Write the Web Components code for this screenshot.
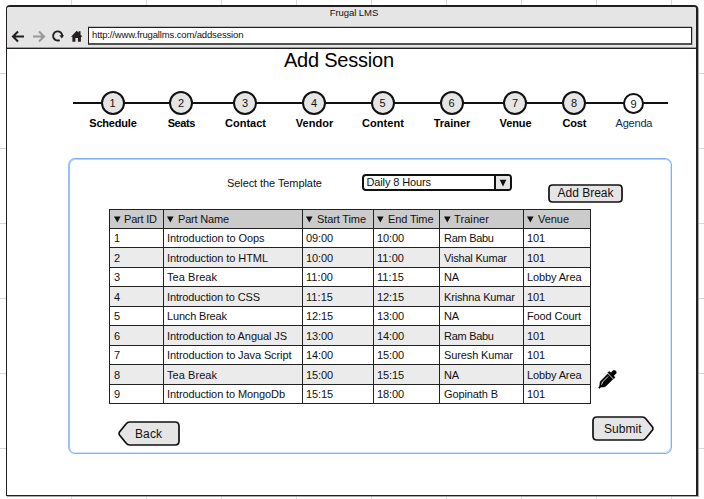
<!DOCTYPE html>
<html lang="en">
<head>
<meta charset="utf-8">
<title>Frugal LMS</title>
<style>
html,body{margin:0;height:100%;overflow:hidden}
body{font:11px/13px "Liberation Sans",Arial,sans-serif;color:#111;background-color:#fff;
background-image:linear-gradient(90deg,#d8d8d8 1px,transparent 1px),linear-gradient(#d8d8d8 1px,transparent 1px);
background-size:75px 75px;background-position:71px 0,0 73px}
</style>
</head>
<body>
<lms-app></lms-app>
<script>
function define(name, html, setup) {
  customElements.define(name, class extends HTMLElement {
    connectedCallback() {
      if (this.shadowRoot) return;
      const root = this.attachShadow({mode: 'open'});
      const t = document.createElement('template');
      t.innerHTML = typeof html === 'function' ? html(this) : html;
      root.appendChild(t.content.cloneNode(true));
      if (setup) setup(this, root);
    }
  });
}

/* A line of text tracked to a given width: <fit-text w="120">. */
define('fit-text', el => `<style>:host{display:inline-block;white-space:pre;flex:none}span{display:inline-block}</style><span>${el.getAttribute('text')}</span>`,
  (el, root) => {
    const s = root.querySelector('span'), w = +el.getAttribute('w'), n = s.textContent.length;
    const natural = s.getBoundingClientRect().width;
    if (w && n > 1) {
      const ls = (w - natural) / (n - 1);
      s.style.letterSpacing = ls + 'px';
      s.style.marginRight = -ls + 'px';
    }
  });

define('browser-window', `
<style>
:host{display:grid;grid-template-rows:42px 1fr;box-sizing:border-box;width:692px;height:491px;margin:5px 0 0 6px;
 border:2px solid #231f20;border-left-width:1.5px;border-bottom-width:1.5px;border-radius:4px 4px 0 0;background:#fff;box-shadow:1px 1px 0 #aaa;overflow:hidden}
header{background:#e5e5e5;border-bottom:1.5px solid #231f20;display:grid;grid-template-rows:20px 18px;box-sizing:border-box;box-shadow:inset 0 -1px #999}
.t{font-size:9.5px;line-height:12px;text-align:center;padding-left:5px}
.bar{display:flex;align-items:center;padding-left:4px}
svg{flex:none;display:block}
.url{box-sizing:border-box;width:604px;height:18px;border:1.5px solid #231f20;border-bottom:2px solid #505250;background:#fff;
 font-size:9.5px;line-height:14px;padding-left:3px;margin-left:1px;box-shadow:0 -1px #bbb,1px 0 #bbb}
</style>
<header>
 <div class="t"><fit-text text="Frugal LMS" w="48.5"></fit-text></div>
 <div class="bar">
  <svg width="76" height="18" viewBox="11 26 76 18">
   <g fill="none" stroke="#231f20" stroke-width="2.1"><path d="M24 35.5H13.5M18 30.500L13 35.5l5 5"/><path stroke="#999" d="M33 35.500H43.500M39 30.500l5 5-5 5"/>
   <path stroke-width="1.9" d="M59.700 39.100A4.600 4.600 0 1 1 62.300 35"/></g>
   <path fill="#231f20" d="M59.300 34.200h4.800l-2.300 3.200zM71 35.700l5.700-5.900 1.800 1.800v-1.400h2v3.400l1.900 2.100h-1.500v5.100h-3v-3.700h-2.500v3.700h-3v-5.100z"/>
  </svg>
  <div class="url"><fit-text text="http://www.frugallms.com/addsession" w="151.5"></fit-text></div>
 </div>
</header>
<slot></slot>`);

define('step-item', el => `
<style>
:host{display:flex;flex-direction:column;align-items:center;min-width:0}
.c{box-sizing:border-box;width:24px;height:24px;border:2px solid #111;border-radius:50%;background:#e5e5e5;text-align:center;line-height:21px;font-size:11px}
.l{margin-top:2px;font-weight:bold;color:#000;padding-left:1px}
:host([current]) .c{width:21px;height:21px;margin:2px 0 1px;background:#fff;line-height:18px}
:host([current]) .l{font-weight:normal;color:#0c2c50}
</style>
<div class="c">${el.getAttribute('n')}</div><div class="l"><fit-text text="${el.getAttribute('label')}" w="${el.getAttribute('w')}"></fit-text></div>`);

define('step-progress', () => {
  const d = [['Schedule',47.5],['Seats',27.5],['Contact',41],['Vendor',37.5],['Content',42],['Trainer',36.5],['Venue',32],['Cost',24],['Agenda',37]];
  return `
<style>
:host{display:grid;grid-template-columns:69px 68px 60px 78px 59px 79px 48px 70px 49px;width:580px;margin:0 0 0 66px;padding:0 10px 0 5px;
 background:linear-gradient(#111,#111) 0 11px/595px 2px no-repeat}
</style>${d.map((x,i)=>`<step-item n="${i+1}" label="${x[0]}" w="${x[1]}"${i==8?' current':''}></step-item>`).join('')}`;
});

define('select-box', `
<style>
:host{display:grid;grid-template-columns:130px 1fr;box-sizing:border-box;width:150px;height:17px;border:2px solid #111;border-radius:4px;overflow:hidden;background:#fff}
.v{padding-left:2.500px;line-height:13px}
.a{border-left:2px solid #111;background:#e5e5e5;display:grid;place-items:center}
</style>
<div class="v"><fit-text text="Daily 8 Hours" w="64.5"></fit-text></div><div class="a"><svg width="8" height="8"><path d="M.7.800h6.600L4 7.500z" fill="#111"/></svg></div>`);

const shapes = {
  rect: [75, 19, 'M4.500 1H70.500Q74 1 74 4.500V14.500Q74 18 70.500 18H4.500Q1 18 1 14.500V4.500Q1 1 4.500 1Z'],
  back: [62, 25, 'M11.500 1H57Q61 1 61 5V20Q61 24 57 24H11.500Q9.500 24 8 22L1.500 14Q.700 12.500 1.500 11L8 3Q9.500 1 11.500 1Z'],
  next: [62, 25, 'M5 1H50.500Q52.500 1 54 3L60.500 11Q61.300 12.500 60.500 14L54 22Q52.500 24 50.500 24H5Q1 24 1 20V5Q1 1 5 1Z']
};
define('shape-button', el => {
  const [w,h,d] = shapes[el.getAttribute('shape')];
  return `
<style>
:host{display:grid;width:${w}px;height:${h}px;flex:none}
:host>*,svg,.l{grid-area:1/1}
.l{font-size:12px;line-height:${el.getAttribute('lh') || h-1}px;padding-left:${el.getAttribute('inset')}px}
</style>
<svg width="${w}" height="${h}"><path d="${d}" fill="#e5e5e5" stroke="#111" stroke-width="1.700"/></svg>
<div class="l"><fit-text text="${el.getAttribute('label')}" w="${el.getAttribute('w')}"></fit-text></div>`;
});

define('session-table', () => {
  const head = [['Part ID',33],['Part Name',51],['Start Time',49],['End Time',45.5],['Trainer',35],['Venue',31]];
  const names = [['Introduction to Oops',97.5],['Introduction to HTML',101],['Tea Break',50],['Introduction to CSS',93],['Lunch Break',60],['Introduction to Angual JS',120],['Introduction to Java Script',124.5],['Tea Break',50],['Introduction to MongoDb',118]];
  const times = ['09:00','10:00','11:00','11:15','12:15','13:00','14:00','15:00','15:15','18:00'];
  const people = [['Ram Babu',50],['Vishal Kumar',63],['NA',15],['Krishna Kumar',71],['NA',15],['Ram Babu',50],['Suresh Kumar',69],['NA',15],['Gopinath B',54]];
  const venue = [['101',18],['101',18],['Lobby Area',54.5],['101',18],['Food Court',54],['101',18],['101',18],['Lobby Area',54.5],['101',18]];
  const f = x => `<fit-text text="${x[0]}" w="${x[1]}"></fit-text>`;
  let cells = head.map(x => `<div class="h"><svg width="7" height="7"><path d="M0 .500h6.600L3.300 6.500z" fill="#111"/></svg>${f(x)}</div>`).join('');
  names.forEach((n,i) => {
    [['' + (i+1),0], n, [times[i],27], [times[i+1],27], people[i], venue[i]]
      .forEach(x => cells += `<div class="${i%2?'e':''}">${f(x)}</div>`);
  });
  return `
<style>
:host{display:grid;grid-template-columns:54px 139px 71px 66px 84px 67px;grid-template-rows:19px 19px 20px 19px 20px 19px 20px 19px 20px 19px;
 width:481px;border:solid #222;border-width:1px 0 0 1px;color:#111}
div{border:solid #222;border-width:0 1px 1px 0;background:#fff;padding:0 0 0 3px;line-height:18px;display:flex;overflow:hidden;box-sizing:border-box}
div:nth-of-type(6n+1),div:nth-of-type(6n+5){padding-left:4px}
.h{background:#cbcbcb;align-items:center;gap:4px}
.h:nth-of-type(6n+1),.h:nth-of-type(6n+5){gap:3px}
.e{background:#ebebeb}
.e fit-text{padding-top:1px}
</style>${cells}`;
});

define('eye-dropper', `
<style>:host{display:block;width:19px;height:19px}svg{display:block}</style>
<svg width="19" height="19" viewBox="0 0 19 19"><path fill="#000" stroke="#000" stroke-width=".5" d="M9.800 2.600l1.400-1.100 1.800 1.300 1.800-2q1.500-1.200 2.900.1 1.300 1.400 0 2.800l-2 2 1.300 1.800-1.300 1.300zM9.700 4l5.200 5.200-6.700 6.600q-1.300 1.200-2.900 1.200l-2.400.1-1.400 1.300-1-1 1.200-1.500.2-2.500q.1-1.600 1.300-2.900z"/><path d="M10 6.500L4.500 12 3.600 14.700" stroke="#fff" stroke-width=".9" fill="none"/></svg>`);

define('session-panel', `
<style>
:host{display:flex;flex-direction:column;box-sizing:border-box;width:604px;height:296px;margin:-1px 0 0 61px;border:1px solid #82b1f8;border-left:2px solid #98bfff;border-radius:7px;background:#fff;
 box-shadow:inset -1px -1px #d0e3ff,inset 0 1px #b5d2ff}
.top{display:flex;height:50px;padding:15px 0 0 157px;box-sizing:border-box}
.lab{width:135px;padding-top:3px}
.add{padding:10px 0 0 36px}
.mid{display:flex;padding-left:39px;height:195px}
.dr{padding:161px 0 0 7px}
.foot{display:flex;justify-content:space-between;padding:12px 17.500px 0 47.500px}
.b{padding-top:5px}
</style>
<div class="top"><div class="lab"><fit-text text="Select the Template" w="95"></fit-text></div><select-box></select-box><div class="add"><shape-button shape="rect" label="Add Break" w="56" inset="9.500"></shape-button></div></div>
<div class="mid"><session-table></session-table><div class="dr"><eye-dropper></eye-dropper></div></div>
<div class="foot"><shape-button class="b" shape="back" label="Back" w="27" inset="17.500" lh="26"></shape-button><shape-button shape="next" label="Submit" w="37.500" inset="12.500" lh="26"></shape-button></div>`);

define('lms-app', `
<style>
:host{display:block}
h1{margin:0;font-size:20px;line-height:22px;font-weight:normal;color:#000;padding-left:277px}
main{display:grid;grid-template-rows:42px 68px 296px}
</style>
<browser-window><main>
<h1><fit-text text="Add Session" w="110"></fit-text></h1>
<step-progress></step-progress>
<session-panel></session-panel>
</main></browser-window>`);
</script>
</body>
</html>
